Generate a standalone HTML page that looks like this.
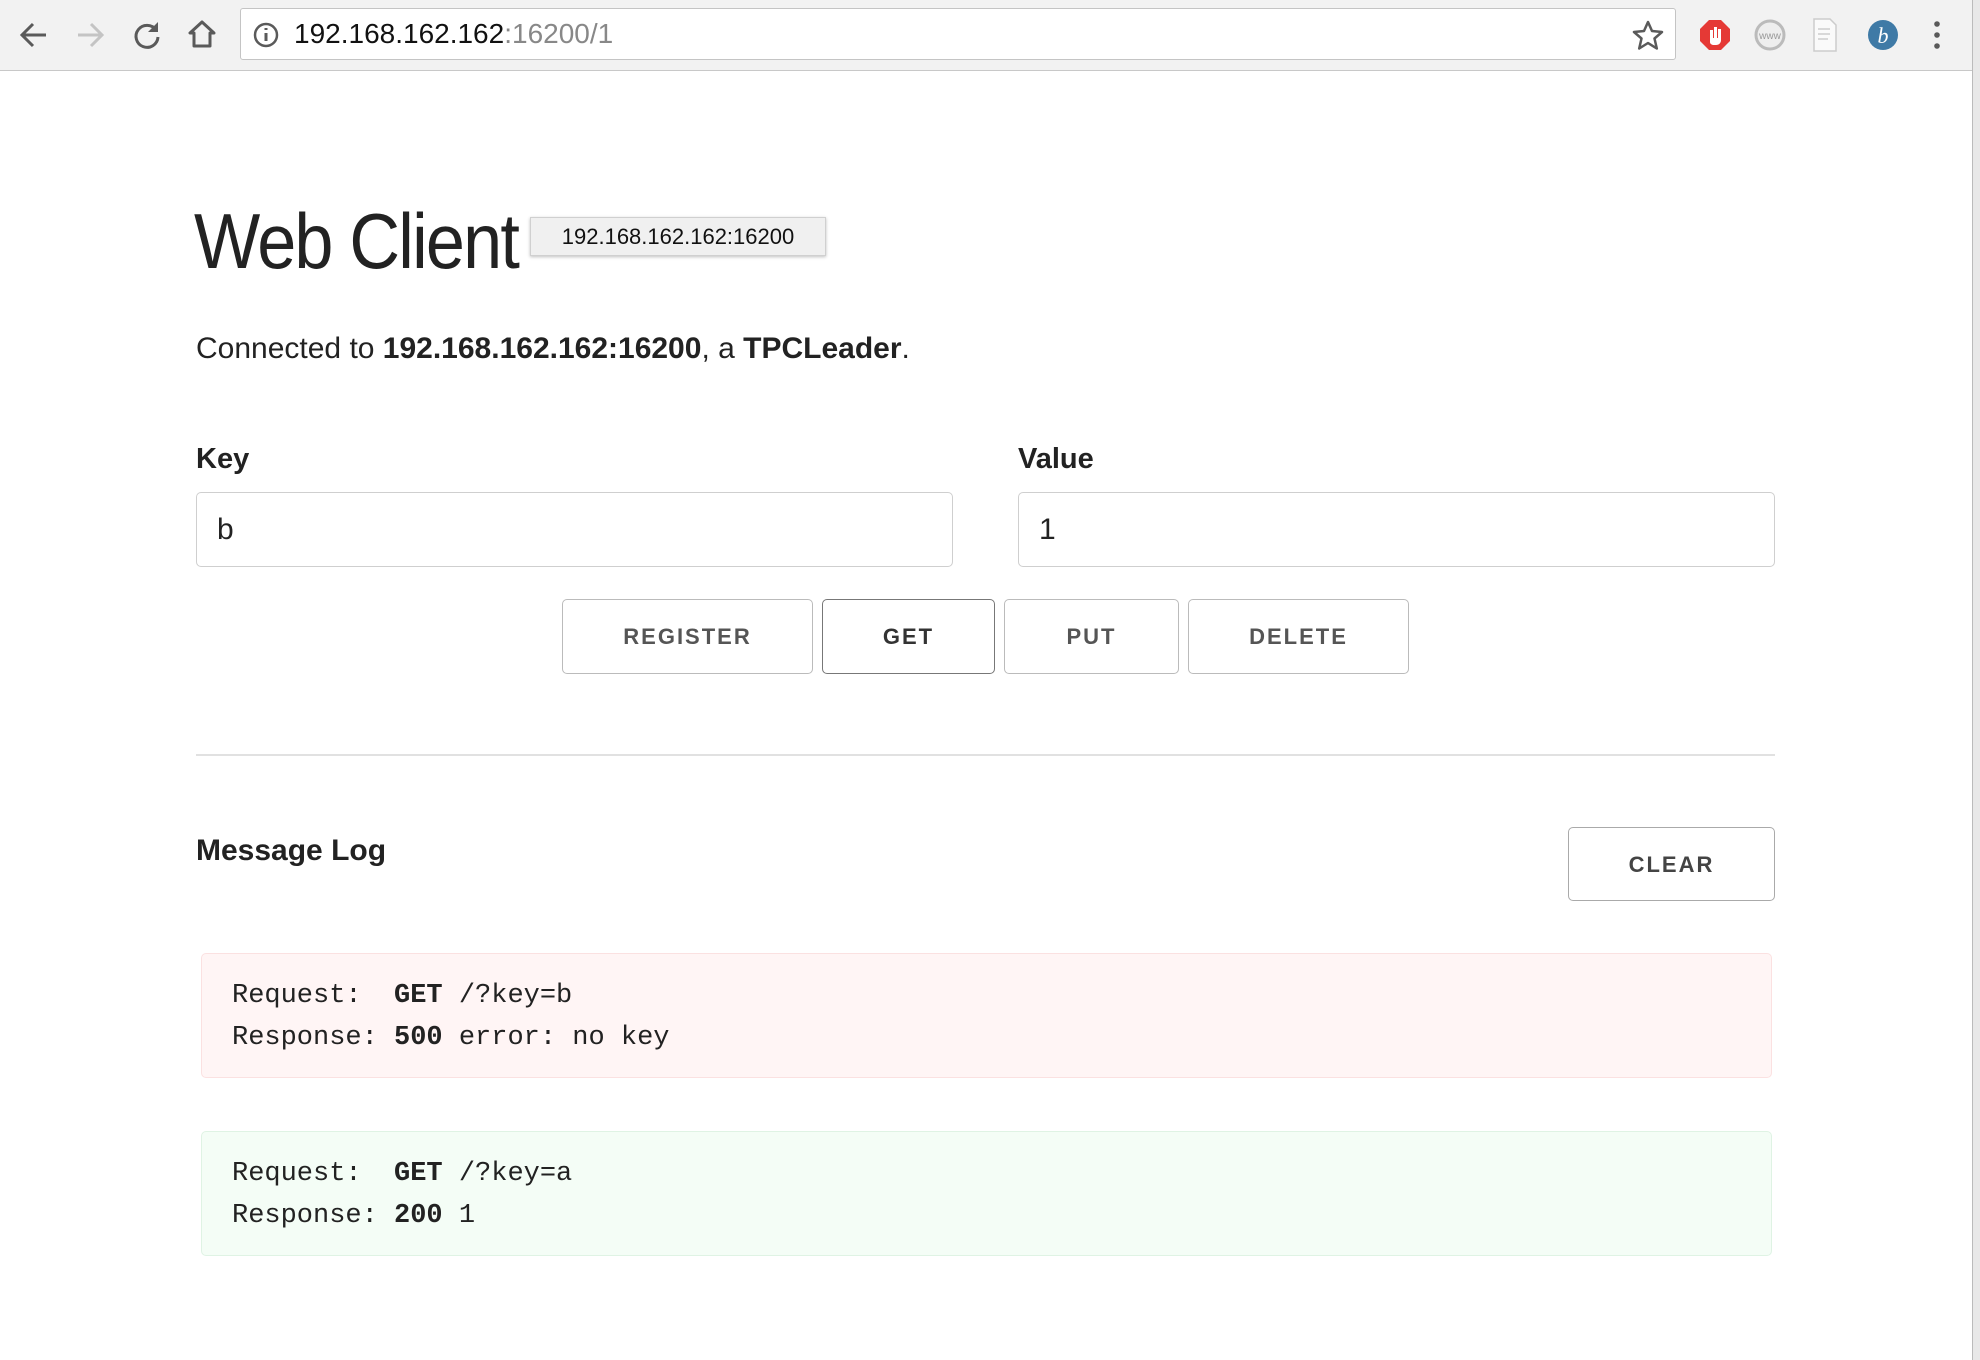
<!DOCTYPE html>
<html><head><meta charset="utf-8"><style>
*{box-sizing:border-box;margin:0;padding:0}
html,body{width:1980px;height:1360px;overflow:hidden;background:#fff;font-family:"Liberation Sans",Arial,sans-serif;color:#222}
.tb{position:absolute;left:0;top:0;width:1980px;height:71px;background:#f2f2f2;border-bottom:1px solid #c8c8c8}
.addr{position:absolute;left:240px;top:8px;width:1436px;height:52px;background:#fff;border:1px solid #c4c4c4;border-radius:3px}
.url{position:absolute;left:294px;top:18px;font-size:28px;color:#111;line-height:32px}
.url span{color:#888}
.ab{position:absolute}
.strip{position:absolute;left:1972px;top:0;width:8px;height:1360px;background:#e8e8e8;border-left:1px solid #bbb}
.abs{position:absolute}
h1{position:absolute;left:194px;top:196px;font-size:78px;font-weight:normal;letter-spacing:-2px;color:#222;transform:scaleX(0.9);transform-origin:left top;white-space:nowrap}
.tip{position:absolute;z-index:2;left:530px;top:217px;width:296px;height:39px;background:#f0f0f0;border:1px solid #d0d0d0;box-shadow:0 1px 3px rgba(0,0,0,.25);font-size:22px;line-height:37px;text-align:center;color:#111}
.conn{position:absolute;left:196px;top:332px;font-size:30px}
.lbl{position:absolute;top:443px;font-size:29px;font-weight:bold}
.inp{position:absolute;top:492px;width:757px;height:75px;border:1px solid #cfcfcf;border-radius:5px;font-size:30px;line-height:73px;padding-left:20px}
.btn{position:absolute;top:599px;height:75px;border:1px solid #bbb;border-radius:5px;font-size:22px;font-weight:bold;letter-spacing:2px;color:#555;text-align:center;line-height:73px}
.hr{position:absolute;left:196px;top:754px;width:1579px;height:2px;background:#e1e1e1}
.log{position:absolute;left:201px;width:1571px;height:125px;border-radius:5px;font-family:"Liberation Mono","Courier New",monospace;font-size:27px;line-height:42px;padding:21px 0 0 30px;white-space:pre;color:#222}
.log b{font-weight:bold}
</style></head><body>
<div class="tb">
<svg class="ab" style="left:18px;top:20px" width="32" height="30" viewBox="0 0 32 30"><path d="M28 15H5M15 4L4 15l11 11" stroke="#5a5a5a" stroke-width="3" fill="none"/></svg>
<svg class="ab" style="left:74px;top:20px" width="32" height="30" viewBox="0 0 32 30"><path d="M4 15h23M17 4l11 11-11 11" stroke="#c4c4c4" stroke-width="3" fill="none"/></svg>
<svg class="ab" style="left:131px;top:19px" width="32" height="32" viewBox="0 0 32 32"><path d="M25 11A11 11 0 1 0 27 18" stroke="#5a5a5a" stroke-width="3" fill="none"/><path d="M27 3v10H17z" fill="#5a5a5a"/></svg>
<svg class="ab" style="left:186px;top:18px" width="32" height="32" viewBox="0 0 32 32"><path d="M16 4L4 15h4v13h16V15h4z" stroke="#5a5a5a" stroke-width="3" fill="none" stroke-linejoin="round"/></svg>
<div class="addr"></div>
<svg class="ab" style="left:252px;top:21px" width="28" height="28" viewBox="0 0 28 28"><circle cx="14" cy="14" r="11" stroke="#5a5a5a" stroke-width="2.5" fill="none"/><path d="M14 12v8M14 7v2" stroke="#5a5a5a" stroke-width="3"/></svg>
<div class="url">192.168.162.162<span>:16200/1</span></div>
<svg class="ab" style="left:1632px;top:19px" width="32" height="32" viewBox="0 0 32 32"><path d="M16 3l4 9 10 1-7.5 6.5 2.3 10L16 24l-8.8 5.5 2.3-10L2 13l10-1z" stroke="#5a5a5a" stroke-width="2.5" fill="none" stroke-linejoin="round"/></svg>
<svg class="ab" style="left:1698px;top:18px" width="34" height="34" viewBox="0 0 34 34"><path d="M11 2h12l9 9v12l-9 9H11l-9-9V11z" fill="#e53935"/><path d="M12 24V12h3v8h1V9h3v11h1V11h3v11c0 3-2 5-5 5h-2c-2 0-4-1-4-3z" fill="#fff"/></svg>
<svg class="ab" style="left:1753px;top:18px" width="34" height="34" viewBox="0 0 34 34"><circle cx="17" cy="17" r="14" stroke="#bbb" stroke-width="3" fill="#eee"/><text x="17" y="21" font-size="10" text-anchor="middle" fill="#999" font-family="Liberation Sans">www</text></svg>
<svg class="ab" style="left:1810px;top:17px" width="32" height="36" viewBox="0 0 32 36"><path d="M4 2h16l6 6v26H4z" fill="#fafafa" stroke="#ccc" stroke-width="1.5"/><path d="M8 12h12M8 17h12M8 22h10" stroke="#ccc" stroke-width="1.5"/></svg>
<svg class="ab" style="left:1867px;top:19px" width="32" height="32" viewBox="0 0 32 32"><circle cx="16" cy="16" r="15" fill="#3f7aa6"/><text x="16" y="24" font-size="22" font-style="italic" text-anchor="middle" fill="#fff" font-family="Liberation Serif">b</text></svg>
<svg class="ab" style="left:1930px;top:20px" width="14" height="30" viewBox="0 0 14 30"><circle cx="7" cy="4" r="2.8" fill="#5a5a5a"/><circle cx="7" cy="15" r="2.8" fill="#5a5a5a"/><circle cx="7" cy="26" r="2.8" fill="#5a5a5a"/></svg>
</div>
<div class="strip"></div>
<h1>Web Client</h1>
<div class="tip">192.168.162.162:16200</div>
<div class="conn">Connected to <b>192.168.162.162:16200</b>, a <b>TPCLeader</b>.</div>
<div class="lbl" style="left:196px">Key</div>
<div class="lbl" style="left:1018px">Value</div>
<div class="inp" style="left:196px">b</div>
<div class="inp" style="left:1018px">1</div>
<div class="btn" style="left:562px;width:251px">REGISTER</div>
<div class="btn" style="left:822px;width:173px;border-color:#777;color:#333">GET</div>
<div class="btn" style="left:1004px;width:175px">PUT</div>
<div class="btn" style="left:1188px;width:221px">DELETE</div>
<div class="hr"></div>
<div class="abs" style="left:196px;top:834px;font-size:30px;font-weight:bold">Message Log</div>
<div class="btn" style="left:1568px;top:827px;width:207px;height:74px;border-color:#aaa;color:#444">CLEAR</div>
<div class="log" style="top:953px;background:#fff5f5;border:1px solid #fbe1e1">Request:  <b>GET</b> /?key=b
Response: <b>500</b> error: no key</div>
<div class="log" style="top:1131px;background:#f4fdf6;border:1px solid #dff3e4">Request:  <b>GET</b> /?key=a
Response: <b>200</b> 1</div>
</body></html>
